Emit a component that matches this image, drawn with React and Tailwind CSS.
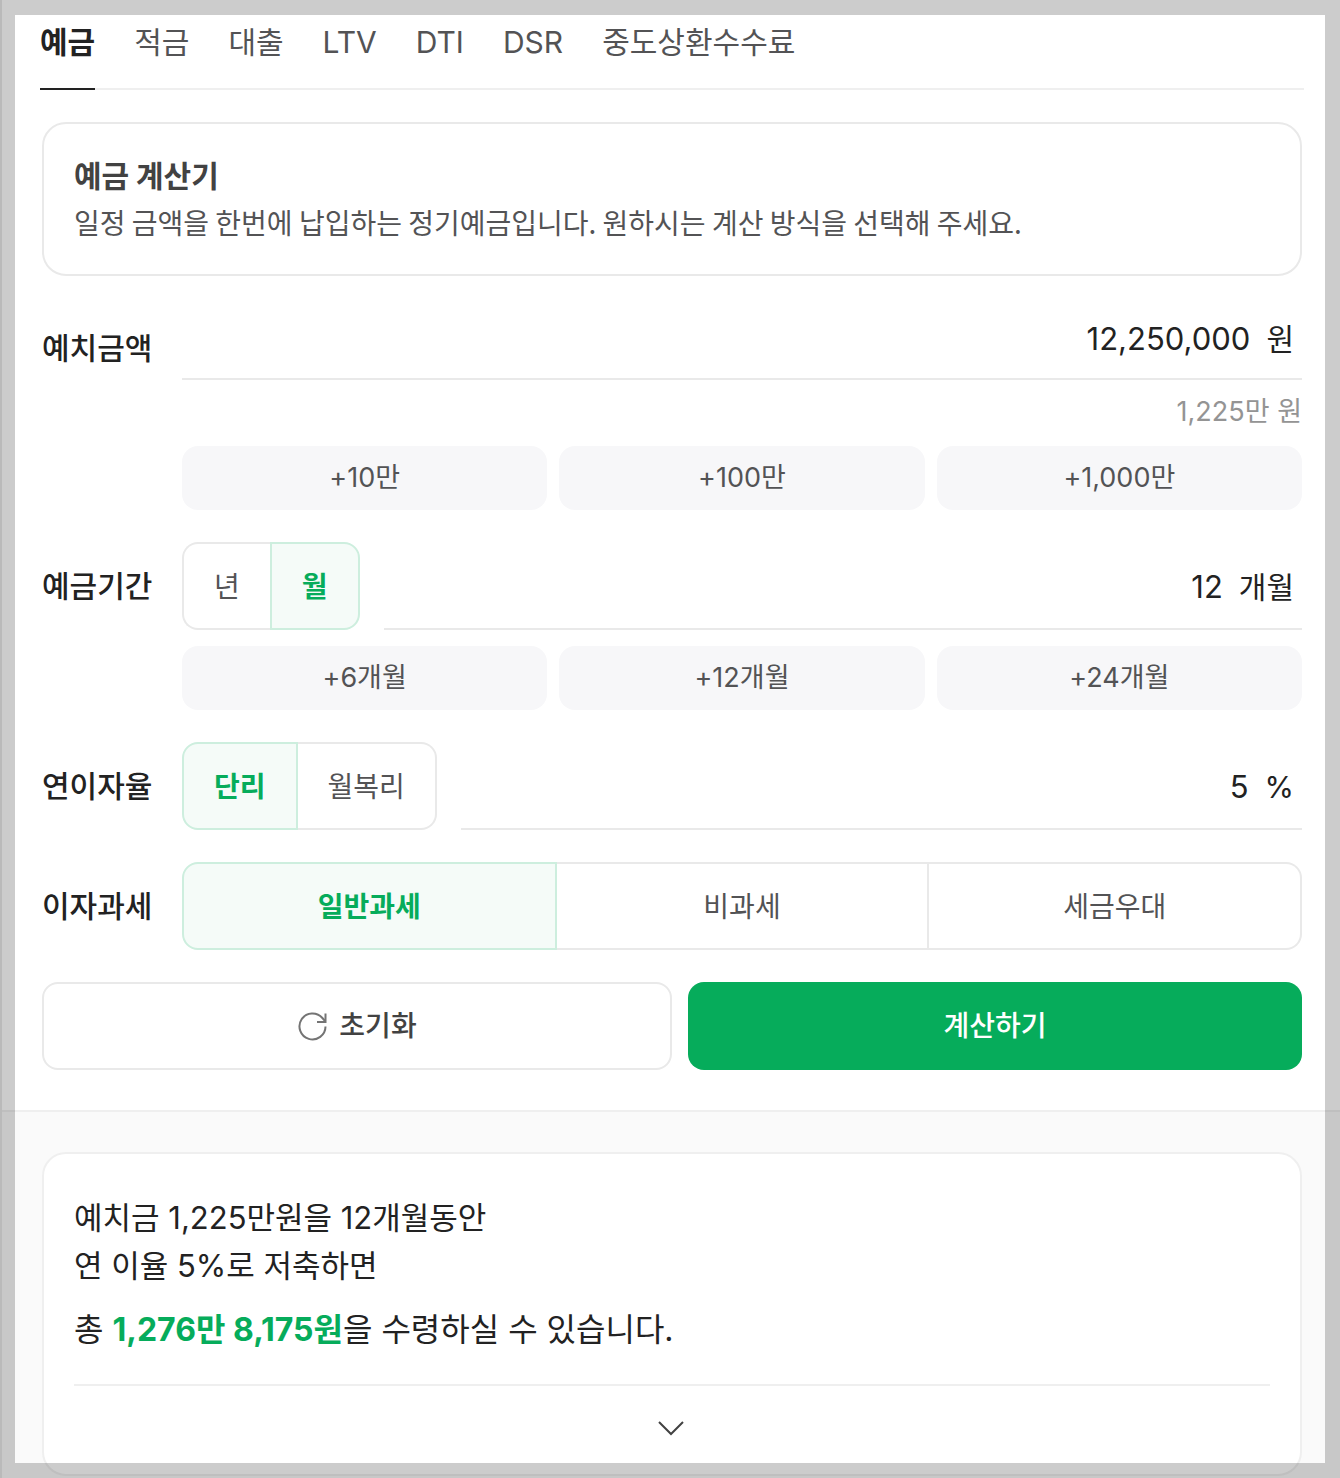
import React, { useState } from 'react';
import clsx from 'clsx';

const tabs = ['예금', '적금', '대출', 'LTV', 'DTI', 'DSR', '중도상환수수료'];

const amountSteps = [
  { label: '+10만', value: 100000 },
  { label: '+100만', value: 1000000 },
  { label: '+1,000만', value: 10000000 },
];

const periodSteps = [
  { label: '+6개월', value: 6 },
  { label: '+12개월', value: 12 },
  { label: '+24개월', value: 24 },
];

const toNumber = (text) => Number(text.replace(/[^0-9]/g, '')) || 0;

const Segment = ({ label, options, value, onChange, fill }) => (
  <div role="group" aria-label={label} className={clsx('flex h-[88px]', fill ? 'flex-1' : 'shrink-0')}>
    {options.map((option, index) => {
      const selected = option === value;
      const nextSelected = options[index + 1] === value;
      return (
        <button
          key={option}
          type="button"
          aria-pressed={selected}
          onClick={() => onChange(option)}
          className={clsx(
            'border-y-2 px-[30px] pt-[2px] text-[28px] leading-10 first:rounded-l-2xl first:border-l-2 last:rounded-r-2xl',
            fill && 'flex-1',
            selected
              ? 'border-[#cdeede] bg-[#f5fbf8] font-bold text-[#06ac5b]'
              : 'border-[#e9e9e9] bg-white text-[#535355]',
            selected && index > 0 && 'border-l-2',
            !nextSelected && 'border-r-2'
          )}
        >
          {option}
        </button>
      );
    })}
  </div>
);

const StepButtons = ({ steps, onStep }) => (
  <div className="grid grid-cols-3 gap-3">
    {steps.map((step) => (
      <button
        key={step.label}
        type="button"
        onClick={() => onStep(step.value)}
        className="h-16 rounded-2xl bg-[#f7f7f9] text-[27px] leading-10 text-[#535355]"
      >
        {step.label}
      </button>
    ))}
  </div>
);

const NumberField = ({ id, value, unit, onChange, className }) => (
  <div className={clsx('flex min-w-0 flex-1 items-center gap-4 border-b-2 border-[#e9e9e9] pr-2 text-[#222]', className)}>
    <input
      id={id}
      type="text"
      inputMode="numeric"
      value={value}
      onChange={(e) => onChange(e.target.value)}
      className="w-full min-w-0 flex-1 bg-transparent text-right text-[31px] leading-12 outline-none"
    />
    <span className="text-[30px] leading-12">{unit}</span>
  </div>
);

const labelStyle = 'w-[140px] shrink-0 text-[30px] leading-12 font-medium text-[#222]';

const App = () => {
  const [tab, setTab] = useState('예금');
  const [amount, setAmount] = useState(12250000);
  const [unit, setUnit] = useState('월');
  const [period, setPeriod] = useState(12);
  const [method, setMethod] = useState('단리');
  const [rate, setRate] = useState('5');
  const [tax, setTax] = useState('일반과세');

  const reset = () => {
    setAmount(0);
    setPeriod(0);
    setRate('');
  };

  return (
    <div className="min-h-screen border-l-2 border-[#e9e9e9] bg-white font-['Inter','Noto_Sans_CJK_KR',sans-serif]">
      {/* Calculator type tabs */}
      <nav className="mr-9 ml-[38px] flex h-[90px] gap-[39px] border-b-2 border-[#efefef] text-[30px] leading-12">
        {tabs.map((name) => (
          <button
            key={name}
            type="button"
            onClick={() => setTab(name)}
            className={clsx(
              '-mb-[2px] border-b-2 pt-[18px] pb-[22px]',
              name === tab ? 'border-[#222] font-bold text-[#222]' : 'border-transparent text-[#535355]'
            )}
          >
            {name}
          </button>
        ))}
      </nav>

      <main className="pt-8">
        <form className="mr-[38px] ml-10 flex flex-col gap-8 pb-10" onSubmit={(e) => e.preventDefault()}>
          <section className="rounded-3xl border-2 border-[#e9e9e9] px-[30px] pt-[26px] pb-7 font-['Noto_Sans_CJK_KR',sans-serif]">
            <h1 className="text-[30px] leading-12 font-bold text-[#424242]">예금 계산기</h1>
            <p className="text-[28px] leading-12 text-[#535355]">
              일정 금액을 한번에 납입하는 정기예금입니다. 원하시는 계산 방식을 선택해 주세요.
            </p>
          </section>

          {/* Deposit amount */}
          <div>
            <div className="flex h-[72px] items-center">
              <label htmlFor="amount" className={clsx(labelStyle, 'pt-2')}>예치금액</label>
              <NumberField
                id="amount"
                value={amount.toLocaleString('en-US')}
                unit="원"
                onChange={(text) => setAmount(toNumber(text))}
                className="h-[72px] pb-2"
              />
            </div>
            <div className="pl-[140px]">
              <p className="pt-3 pb-3.5 text-right text-[27px] leading-10 text-[#949494]">
                {(amount / 10000).toLocaleString('en-US')}만 원
              </p>
              <StepButtons steps={amountSteps} onStep={(value) => setAmount(amount + value)} />
            </div>
          </div>

          {/* Deposit period */}
          <div>
            <div className="flex items-center">
              <label htmlFor="period" className={labelStyle}>예금기간</label>
              <Segment label="기간 단위" options={['년', '월']} value={unit} onChange={setUnit} />
              <NumberField
                id="period"
                value={period}
                unit="개월"
                onChange={(text) => setPeriod(toNumber(text))}
                className="ml-6 h-[88px] pt-1"
              />
            </div>
            <div className="pt-4 pl-[140px]">
              <StepButtons steps={periodSteps} onStep={(value) => setPeriod(period + value)} />
            </div>
          </div>

          {/* Interest rate */}
          <div className="flex items-center">
            <label htmlFor="rate" className={labelStyle}>연이자율</label>
            <Segment label="이자 방식" options={['단리', '월복리']} value={method} onChange={setMethod} />
            <NumberField id="rate" value={rate} unit="%" onChange={setRate} className="ml-6 h-[88px] pt-1" />
          </div>

          {/* Tax */}
          <div className="flex items-center">
            <span className={labelStyle}>이자과세</span>
            <Segment label="이자과세" options={['일반과세', '비과세', '세금우대']} value={tax} onChange={setTax} fill />
          </div>

          <div className="grid grid-cols-[630fr_614fr] gap-4 text-[28px] leading-10 font-medium">
            <button
              type="button"
              onClick={reset}
              className="flex h-[88px] items-center justify-center gap-3 rounded-2xl border-2 border-[#e9e9e9] text-[#424242]"
            >
              <svg width="30" height="30" viewBox="0 0 30 30" fill="none" stroke="#747474" strokeWidth="2" aria-hidden="true">
                <path d="M28.5 15.5A13 13 0 1 1 25.4 7L28.5 10.5" />
                <path d="M28.5 2.5V11H20" />
              </svg>
              초기화
            </button>
            <button type="submit" className="h-[88px] rounded-2xl bg-[#06ac5b] text-white">
              계산하기
            </button>
          </div>
        </form>

        {/* Result */}
        <div className="border-t-2 border-[#efefef] bg-[#fafafa] pt-10 pr-[38px] pb-[2px] pl-10">
          <section className="rounded-3xl border-2 border-[#efefef] bg-white px-[30px] pt-10 text-[31px] leading-12 text-[#222]">
            <p>예치금 1,225만원을 12개월동안</p>
            <p>연 이율 5%로 저축하면</p>
            <p className="pt-4 pb-[30px] text-[32px]">
              총 <strong className="font-bold text-[#06ac5b]">1,276만 8,175원</strong>을 수령하실 수 있습니다.
            </p>
            <button
              type="button"
              aria-label="상세 결과 펼치기"
              className="flex h-[90px] w-full items-center justify-center border-t-2 border-[#efefef] pb-1"
            >
              <svg width="28" height="16" viewBox="0 0 28 16" fill="none" stroke="#424242" strokeWidth="2" aria-hidden="true">
                <path d="M1 2L13 14L25 2" />
              </svg>
            </button>
          </section>
        </div>
      </main>

      {/* Dimmed edge around the window */}
      <div className="pointer-events-none fixed inset-0 border-[15px] border-black/20" />
    </div>
  );
};

export default App;
